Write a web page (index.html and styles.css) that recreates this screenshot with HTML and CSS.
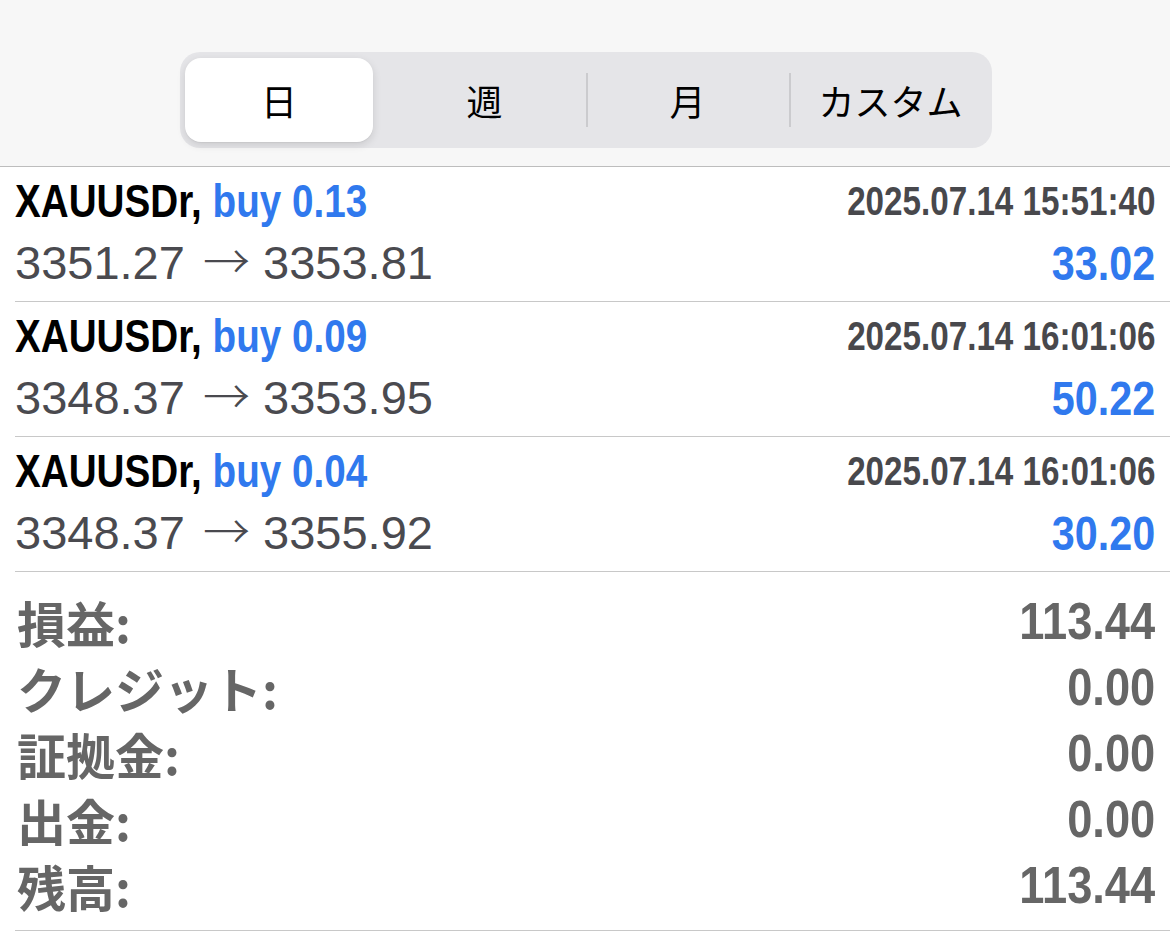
FILE: index.html
```html
<!DOCTYPE html>
<html lang="ja">
<head>
<meta charset="utf-8">
<title>履歴</title>
<link rel="stylesheet" href="styles.css">
</head>
<body>
<header class="header">
  <div class="segmented">
    <div class="seg seg-active"><span class="pill">日</span></div>
    <div class="seg">週</div>
    <div class="seg seg-divided">月</div>
    <div class="seg seg-divided">カスタム</div>
  </div>
</header>
<main class="list">
  <div class="trade">
    <div class="line">
      <span class="title">XAUUSDr, <span class="blue">buy 0.13</span></span>
      <span class="date">2025.07.14 15:51:40</span>
    </div>
    <div class="line">
      <span class="prices">3351.27 <span class="arrow">→</span> 3353.81</span>
      <span class="profit">33.02</span>
    </div>
  </div>
  <div class="trade">
    <div class="line">
      <span class="title">XAUUSDr, <span class="blue">buy 0.09</span></span>
      <span class="date">2025.07.14 16:01:06</span>
    </div>
    <div class="line">
      <span class="prices">3348.37 <span class="arrow">→</span> 3353.95</span>
      <span class="profit">50.22</span>
    </div>
  </div>
  <div class="trade">
    <div class="line">
      <span class="title">XAUUSDr, <span class="blue">buy 0.04</span></span>
      <span class="date">2025.07.14 16:01:06</span>
    </div>
    <div class="line">
      <span class="prices">3348.37 <span class="arrow">→</span> 3355.92</span>
      <span class="profit">30.20</span>
    </div>
  </div>
  <div class="summary">
    <div class="sum-row"><span class="label">損益:</span><span class="value">113.44</span></div>
    <div class="sum-row"><span class="label">クレジット:</span><span class="value">0.00</span></div>
    <div class="sum-row"><span class="label">証拠金:</span><span class="value">0.00</span></div>
    <div class="sum-row"><span class="label">出金:</span><span class="value">0.00</span></div>
    <div class="sum-row"><span class="label">残高:</span><span class="value">113.44</span></div>
  </div>
</main>
</body>
</html>
```
FILE: styles.css
```css
html, body {
  margin: 0;
  padding: 0;
  background: #ffffff;
}
body {
  width: 1170px;
  height: 935px;
  overflow: hidden;
  font-family: "Liberation Sans", "Noto Sans CJK JP", sans-serif;
}
.header {
  height: 166px;
  background: #f7f7f7;
  border-bottom: 1px solid #bdbdbd;
  display: flex;
  justify-content: center;
  padding-left: 2px;
}
.segmented {
  margin-top: 52px;
  width: 812px;
  height: 96px;
  background: #e5e5e8;
  border-radius: 20px;
  display: grid;
  grid-template-columns: repeat(4, 1fr);
  align-items: center;
}
.seg {
  height: 96px;
  display: flex;
  align-items: center;
  justify-content: center;
  font-family: "Noto Sans CJK JP", sans-serif;
  font-size: 36px;
  font-weight: 400;
  color: #000;
  position: relative;
}
.seg-divided::before {
  content: "";
  position: absolute;
  left: 0;
  top: 21px;
  width: 2px;
  height: 54px;
  background: #cbcbce;
}
.seg-active {
  justify-content: stretch;
}
.pill {
  flex: 1;
  margin: 6px 10px 6px 5px;
  height: 84px;
  background: #fff;
  border-radius: 16px;
  box-shadow: 0 3px 8px rgba(0,0,0,0.12), 0 1px 1px rgba(0,0,0,0.04);
  display: flex;
  align-items: center;
  justify-content: center;
}
.list {
  display: flex;
  flex-direction: column;
}
.trade {
  margin-left: 15px;
  padding: 3px 15px 7px 0;
  border-bottom: 1px solid #c8c8c8;
}
.line {
  height: 62px;
  display: flex;
  align-items: center;
  justify-content: space-between;
  white-space: nowrap;
}
.title {
  display: inline-block;
  font-family: "Liberation Sans", sans-serif;
  font-weight: 700;
  font-size: 46px;
  color: #000;
  transform: scaleX(0.84);
  transform-origin: left center;
}
.blue {
  color: #3079ee;
}
.date {
  display: inline-block;
  font-family: "Liberation Sans", sans-serif;
  font-weight: 700;
  font-size: 40px;
  color: #48484c;
  transform: scaleX(0.83);
  transform-origin: right center;
}
.prices {
  font-family: "Liberation Sans", sans-serif;
  font-size: 47px;
  line-height: 54px;
  color: #4a4a4f;
}
.arrow {
  font-family: "Noto Sans CJK JP", sans-serif;
  font-weight: 300;
  font-size: 47px;
  line-height: 0;
  margin-left: 5px;
}
.profit {
  display: inline-block;
  font-family: "Liberation Sans", sans-serif;
  font-weight: 700;
  font-size: 48px;
  color: #3079ee;
  transform: scaleX(0.86);
  transform-origin: right center;
}
.summary {
  margin-left: 15px;
  padding: 16px 15px 12px 0;
  border-bottom: 1px solid #c8c8c8;
}
.sum-row {
  height: 66px;
  display: flex;
  align-items: center;
  justify-content: space-between;
  color: #666666;
}
.label {
  font-family: "Noto Sans CJK JP", sans-serif;
  font-weight: 700;
  font-size: 49px;
  margin-left: 2px;
}
.value {
  display: inline-block;
  font-family: "Liberation Sans", sans-serif;
  font-weight: 700;
  font-size: 52px;
  transform: scaleX(0.87);
  transform-origin: right center;
}
```
